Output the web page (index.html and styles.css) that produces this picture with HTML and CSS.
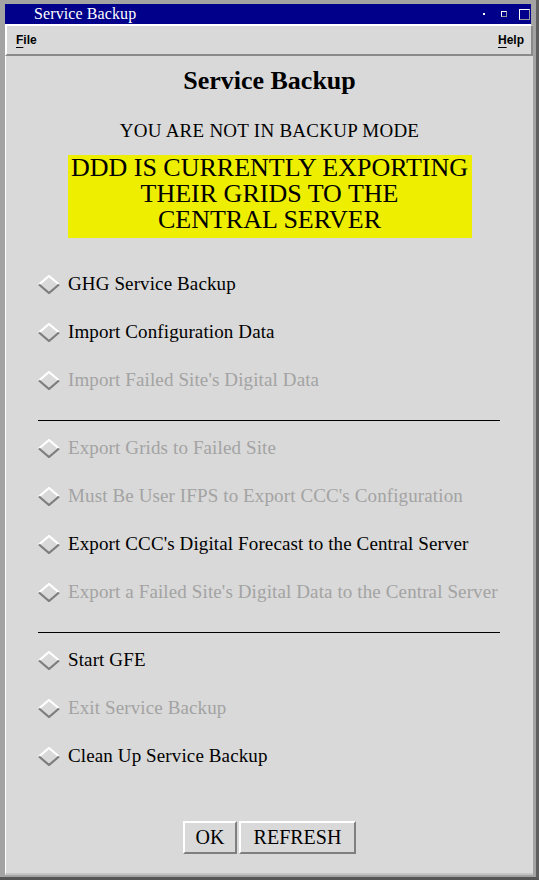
FILE: index.html
```html
<!DOCTYPE html>
<html>
<head>
<meta charset="utf-8">
<title>Service Backup</title>
<link rel="stylesheet" href="styles.css">
</head>
<body>
<div class="window">
  <div class="titlebar">
    <span class="title-text">Service Backup</span>
    <span class="wbtns">
      <span class="wb-dot"></span>
      <span class="wb-small"></span>
      <span class="wb-large"></span>
    </span>
  </div>
  <div class="menubar">
    <span class="menu"><u>F</u>ile</span>
    <span class="menu"><u>H</u>elp</span>
  </div>
  <div class="content">
    <h1 class="heading">Service Backup</h1>
    <div class="mode">YOU ARE NOT IN BACKUP MODE</div>
    <div class="notice">
      <div class="nline">DDD IS CURRENTLY EXPORTING</div>
      <div class="nline">THEIR GRIDS TO THE</div>
      <div class="nline">CENTRAL SERVER</div>
    </div>

    <div class="group first">
      <div class="item"><svg class="dia" width="22" height="19" viewBox="0 0 22 19"><polyline points="1,9.5 11,1 21,9.5" class="hi"/><polyline points="1,9.5 11,18 21,9.5" class="lo"/></svg><span>GHG Service Backup</span></div>
      <div class="item"><svg class="dia" width="22" height="19" viewBox="0 0 22 19"><polyline points="1,9.5 11,1 21,9.5" class="hi"/><polyline points="1,9.5 11,18 21,9.5" class="lo"/></svg><span>Import Configuration Data</span></div>
      <div class="item off"><svg class="dia" width="22" height="19" viewBox="0 0 22 19"><polyline points="1,9.5 11,1 21,9.5" class="hi"/><polyline points="1,9.5 11,18 21,9.5" class="lo"/></svg><span>Import Failed Site's Digital Data</span></div>
    </div>
    <hr class="sep">
    <div class="group">
      <div class="item off"><svg class="dia" width="22" height="19" viewBox="0 0 22 19"><polyline points="1,9.5 11,1 21,9.5" class="hi"/><polyline points="1,9.5 11,18 21,9.5" class="lo"/></svg><span>Export Grids to Failed Site</span></div>
      <div class="item off"><svg class="dia" width="22" height="19" viewBox="0 0 22 19"><polyline points="1,9.5 11,1 21,9.5" class="hi"/><polyline points="1,9.5 11,18 21,9.5" class="lo"/></svg><span>Must Be User IFPS to Export CCC's Configuration</span></div>
      <div class="item"><svg class="dia" width="22" height="19" viewBox="0 0 22 19"><polyline points="1,9.5 11,1 21,9.5" class="hi"/><polyline points="1,9.5 11,18 21,9.5" class="lo"/></svg><span>Export CCC's Digital Forecast to the Central Server</span></div>
      <div class="item off"><svg class="dia" width="22" height="19" viewBox="0 0 22 19"><polyline points="1,9.5 11,1 21,9.5" class="hi"/><polyline points="1,9.5 11,18 21,9.5" class="lo"/></svg><span>Export a Failed Site's Digital Data to the Central Server</span></div>
    </div>
    <hr class="sep">
    <div class="group">
      <div class="item"><svg class="dia" width="22" height="19" viewBox="0 0 22 19"><polyline points="1,9.5 11,1 21,9.5" class="hi"/><polyline points="1,9.5 11,18 21,9.5" class="lo"/></svg><span>Start GFE</span></div>
      <div class="item off"><svg class="dia" width="22" height="19" viewBox="0 0 22 19"><polyline points="1,9.5 11,1 21,9.5" class="hi"/><polyline points="1,9.5 11,18 21,9.5" class="lo"/></svg><span>Exit Service Backup</span></div>
      <div class="item"><svg class="dia" width="22" height="19" viewBox="0 0 22 19"><polyline points="1,9.5 11,1 21,9.5" class="hi"/><polyline points="1,9.5 11,18 21,9.5" class="lo"/></svg><span>Clean Up Service Backup</span></div>
    </div>

    <div class="buttons">
      <button class="btn ok">OK</button>
      <button class="btn refresh">REFRESH</button>
    </div>
  </div>
</div>
</body>
</html>
```
FILE: styles.css
```css
html, body {
  margin: 0;
  padding: 0;
  background: #a3a3a3;
}
.window {
  width: 539px;
  height: 880px;
  box-sizing: border-box;
  background: #a3a3a3;
  border-right: 3px solid #5e5e5e;
  border-bottom: 3px solid #555555;
  padding: 4px 3px 2px 5px;
  display: flex;
  flex-direction: column;
}
.titlebar {
  height: 21px;
  box-sizing: border-box;
  margin-right: 2px;
  background: #00008b;
  color: #ffffff;
  display: flex;
  align-items: center;
  padding-left: 29px;
  border-bottom: 1px solid #ffffff;
  font-family: "Liberation Serif", serif;
  font-size: 16px;
}
.title-text {
  line-height: 20px;
  letter-spacing: 0.1px;
}
.wbtns {
  margin-left: auto;
  display: flex;
  align-items: center;
  padding-right: 1px;
}
.wb-dot {
  width: 2px;
  height: 2px;
  background: #ffffff;
  margin-right: 16px;
}
.wb-small {
  width: 4px;
  height: 4px;
  border-top: 1px solid #ffffff;
  border-left: 1px solid #ffffff;
  border-right: 1px solid #9a9a9a;
  border-bottom: 1px solid #9a9a9a;
  margin-right: 12px;
}
.wb-large {
  width: 9px;
  height: 9px;
  border-top: 1px solid #ffffff;
  border-left: 1px solid #ffffff;
  border-right: 1px solid #9a9a9a;
  border-bottom: 1px solid #9a9a9a;
}
.menubar {
  height: 31px;
  box-sizing: border-box;
  background: #d9d9d9;
  border-top: 1px solid #ffffff;
  border-left: 2px solid #ffffff;
  border-bottom: 2px solid #8a8a8a;
  border-right: 2px solid #8a8a8a;
  display: flex;
  justify-content: space-between;
  align-items: center;
  padding: 0 7px 1px 9px;
  font-family: "Liberation Sans", Arial, sans-serif;
  font-weight: bold;
  font-size: 12px;
}
.menu u {
  text-underline-offset: 3px;
}
.content {
  flex: 1;
  background: #d9d9d9;
  border-left: 1px solid #ffffff;
  border-bottom: 2px solid #c4c4c4;
  display: flex;
  flex-direction: column;
  align-items: stretch;
  font-family: "Liberation Serif", "Times New Roman", serif;
  color: #000000;
}
.heading {
  margin: 10px 0 0;
  font-size: 26px;
  line-height: 30px;
  font-weight: bold;
  text-align: center;
}
.mode {
  margin-top: 24px;
  font-size: 19px;
  line-height: 22px;
  text-align: center;
  letter-spacing: 0.25px;
}
.notice {
  align-self: center;
  width: 404px;
  margin-top: 13px;
  background: #eeee00;
  padding: 0 0 5px;
  text-align: center;
  display: flex;
  flex-direction: column;
}
.nline {
  height: 26px;
  line-height: 26px;
  font-size: 26px;
}
.group {
  display: flex;
  flex-direction: column;
  padding-left: 32px;
}
.group.first {
  margin-top: 22px;
}
.item {
  height: 48px;
  display: flex;
  align-items: center;
  font-size: 19px;
  letter-spacing: 0.12px;
  white-space: nowrap;
}
.item.off {
  color: #a3a3a3;
}
.dia {
  flex: none;
  margin-right: 8px;
}
.dia polyline {
  fill: none;
  stroke-width: 2.2;
}
.dia .hi {
  stroke: #ffffff;
}
.dia .lo {
  stroke: #7d7d7d;
}
.sep {
  border: none;
  border-top: 1px solid #000000;
  height: 0;
  margin: 16px 33px 3px 32px;
}
.buttons {
  margin-top: auto;
  margin-bottom: 19px;
  display: flex;
  justify-content: center;
  gap: 2px;
}
.btn {
  height: 33px;
  box-sizing: border-box;
  background: #d9d9d9;
  border-top: 2px solid #ffffff;
  border-left: 2px solid #ffffff;
  border-bottom: 2px solid #7f7f7f;
  border-right: 2px solid #7f7f7f;
  font-family: "Liberation Serif", "Times New Roman", serif;
  font-size: 20px;
  color: #000000;
  padding: 0;
  margin: 0;
}
.btn.ok {
  width: 54px;
}
.btn.refresh {
  width: 117px;
}
```
